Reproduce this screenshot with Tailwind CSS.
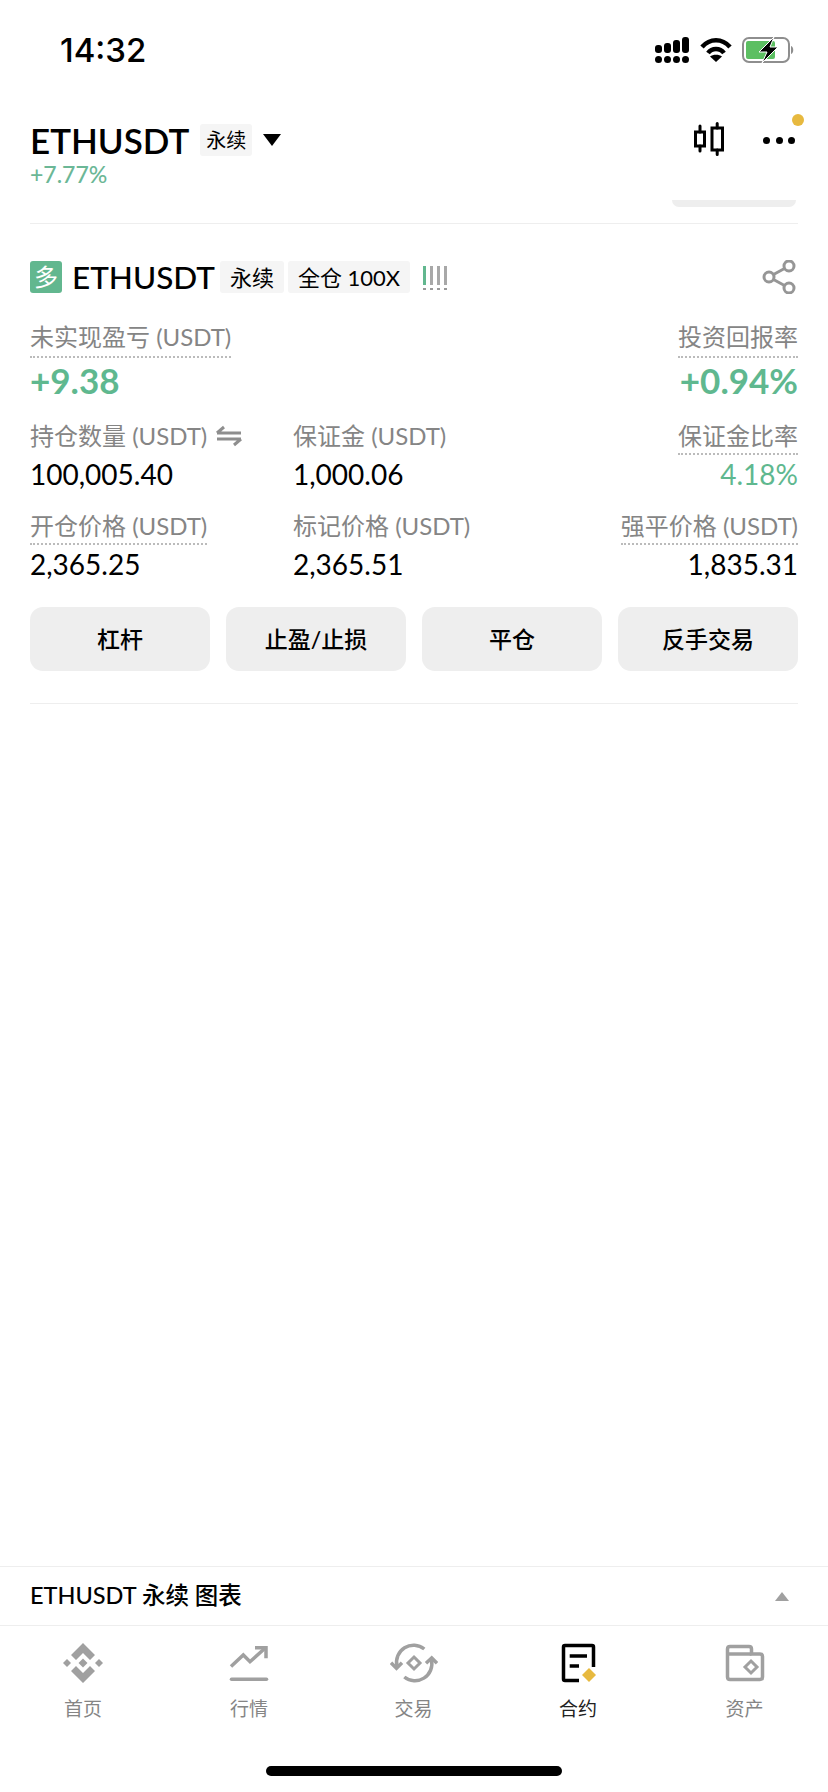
<!DOCTYPE html>
<html lang="zh-CN">
<head>
  <meta charset="UTF-8" />
  <title>ETHUSDT</title>
  <script src="https://cdn.jsdelivr.net/npm/@tailwindcss/browser@4"></script>
</head>
<body class="bg-white text-black font-['Lato','Noto_Sans_CJK_SC',sans-serif]">
  <div class="w-[828px] h-[1792px] flex flex-col overflow-hidden">
    <!-- status bar -->
    <div class="h-[100px] flex justify-between pl-[60px] pr-[33px] pt-[30px] shrink-0">
      <span class="text-[33px] leading-[40px] font-medium font-['Inter',sans-serif]">14:32</span>
      <div class="flex items-start gap-[10px] pt-[7px]">
        <svg class="mr-[1px]" width="34" height="26" viewBox="0 0 34 26" fill="#000">
          <rect x="0" y="8" width="7" height="8" rx="3"/><rect x="9" y="6" width="7" height="10" rx="3"/><rect x="18" y="3" width="7" height="13" rx="3"/><rect x="27" y="0" width="7" height="16" rx="3"/>
          <circle cx="3.500" cy="22.500" r="3.500"/><circle cx="12.500" cy="22.500" r="3.500"/><circle cx="21.500" cy="22.500" r="3.500"/><circle cx="30.500" cy="22.500" r="3.500"/>
        </svg>
        <svg width="32" height="26" viewBox="0 0 32 26" fill="none" stroke="#000" stroke-width="4.500">
          <path d="M2 10 C10 1 22 1 30 10"/><path d="M8 16 C12 10.500 20 10.500 24 16"/><path d="M16 25 L10 19.500 C13 17 19 17 22 19.500 Z" fill="#000" stroke="none"/>
        </svg>
        <svg width="53" height="26" viewBox="0 0 53 26" fill="none">
          <rect x="1" y="1" width="46" height="24" rx="6" stroke="#8e8e8e" stroke-width="2"/>
          <rect x="4" y="4" width="29" height="18" rx="2" fill="#5cbf62"/>
          <path d="M49 9 C52 10 52 16 49 17 Z" fill="#8e8e8e"/>
          <path d="M32 0 L17 15 H25 L20 26 L36 10 H28 Z" fill="#000" stroke="#fff" stroke-width="1"/>
        </svg>
      </div>
    </div>

    <!-- symbol header -->
    <div class="h-[123px] px-[30px] flex justify-between shrink-0">
      <div class="flex flex-col">
        <div class="flex items-center h-[40px] mt-[20px]">
          <span class="text-[35px] leading-[40px] font-semibold">ETHUSDT</span>
          <span class="ml-[11px] bg-[#f5f5f5] rounded-[3px] h-[32px] w-[52px] flex items-center justify-center text-[20px]">永续</span>
          <svg class="ml-[11px]" width="18" height="12" viewBox="0 0 18 12" fill="#000"><path d="M0 0 H18 L9 12 Z"/></svg>
        </div>
        <span class="text-[23px] leading-[28px] font-medium text-[#6bb796]">+7.77%</span>
      </div>
      <div class="relative flex items-start gap-[39px] mt-[22px] mr-[3px]">
        <svg width="30" height="34" viewBox="0 0 30 34" fill="none" stroke="#000" stroke-width="3" stroke-linecap="round">
          <rect x="1.500" y="10" width="9" height="14"/><path d="M6 4 V10 M6 24 V29"/>
          <rect x="18" y="6" width="10.500" height="22"/><path d="M23.200 1.500 V6 M23.200 28 V32.500"/>
        </svg>
        <div class="flex mt-[15px] w-[32px] justify-between">
          <span class="w-[7px] h-[7px] rounded-full bg-black"></span><span class="w-[7px] h-[7px] rounded-full bg-black"></span><span class="w-[7px] h-[7px] rounded-full bg-black"></span>
        </div>
        <span class="absolute right-[-9px] top-[-8px] w-[12px] h-[12px] rounded-full bg-[#e7b93f]"></span>
      </div>
    </div>

    <!-- edge of the card scrolled under the header -->
    <div class="h-[0px] relative shrink-0">
      <div class="absolute left-[672px] top-[-23px] w-[124px] h-[7px] bg-[#eeeeee] rounded-b-[8px]"></div>
    </div>

    <!-- position card -->
    <div class="mx-[30px] border-t border-b border-[#eeeeee] h-[481px] shrink-0">
      <div class="flex items-center justify-between mt-[37px] h-[32px]">
        <div class="flex items-center">
          <span class="w-[32px] h-[32px] rounded-[3px] bg-[#62b78f] text-white text-[24px] flex items-center justify-center">多</span>
          <span class="ml-[10px] text-[31.500px] leading-[32px] font-medium">ETHUSDT</span>
          <span class="ml-[5px] bg-[#f5f5f5] rounded-[3px] h-[32px] w-[64px] flex items-center justify-center text-[22px]">永续</span>
          <span class="ml-[4px] bg-[#f5f5f5] rounded-[3px] h-[32px] w-[122px] flex items-center justify-center text-[22px]">全仓 100X</span>
          <div class="ml-[13px] flex gap-[4px] items-end h-[26px]">
            <span class="flex flex-col items-center gap-[3px]"><span class="w-[3px] h-[19px] bg-[#62b78f]"></span><span class="w-[3px] h-[2px] bg-[#999]"></span></span>
            <span class="flex flex-col items-center gap-[3px]"><span class="w-[3px] h-[19px] bg-[#a8a8a8]"></span><span class="w-[3px] h-[2px] bg-[#999]"></span></span>
            <span class="flex flex-col items-center gap-[3px]"><span class="w-[3px] h-[19px] bg-[#a8a8a8]"></span><span class="w-[3px] h-[2px] bg-[#999]"></span></span>
            <span class="flex flex-col items-center gap-[3px]"><span class="w-[3px] h-[19px] bg-[#a8a8a8]"></span><span class="w-[3px] h-[2px] bg-[#999]"></span></span>
          </div>
        </div>
        <svg class="mr-[2px]" width="34" height="34" viewBox="0 0 34 34" fill="none" stroke="#969696" stroke-width="3">
          <circle cx="7" cy="17" r="5"/><circle cx="27" cy="6" r="5"/><circle cx="27" cy="28" r="5"/><path d="M11.500 14.500 L22.500 8.500 M11.500 19.500 L22.500 25.500"/>
        </svg>
      </div>

      <div class="flex justify-between mt-[28px]">
        <div class="flex flex-col items-start">
          <span class="text-[24px] leading-[31px] text-[#858585] border-b-2 border-dotted border-[#bbbbbb] pb-[4px]">未实现盈亏 (USDT)</span>
          <span class="text-[35px] leading-[40px] font-bold text-[#5fb88f] mt-[2px]">+9.38</span>
        </div>
        <div class="flex flex-col items-end">
          <span class="text-[24px] leading-[31px] text-[#858585] border-b-2 border-dotted border-[#bbbbbb] pb-[4px]">投资回报率</span>
          <span class="text-[35px] leading-[40px] font-bold text-[#5fb88f] mt-[2px]">+0.94%</span>
        </div>
      </div>

      <div class="grid grid-cols-[263px_1fr_auto] mt-[20px]">
        <div class="flex flex-col items-start">
          <span class="text-[24px] leading-[31px] text-[#858585] flex items-center border-b-2 border-transparent pb-[2px]">持仓数量 (USDT)
            <svg class="ml-[9px]" width="26" height="22" viewBox="0 0 26 22" fill="none" stroke="#8e8e8e" stroke-width="3"><path d="M1 8 H25 M1 8 L8 2 M25 14 H1 M25 14 L18 20"/></svg>
          </span>
          <span class="text-[28px] leading-[36px] mt-[1px]">100,005.40</span>
        </div>
        <div class="flex flex-col items-start">
          <span class="text-[24px] leading-[31px] text-[#858585] border-b-2 border-transparent pb-[2px]">保证金 (USDT)</span>
          <span class="text-[28px] leading-[36px] mt-[1px]">1,000.06</span>
        </div>
        <div class="flex flex-col items-end">
          <span class="text-[24px] leading-[31px] text-[#858585] border-b-2 border-dotted border-[#bbbbbb] pb-[2px]">保证金比率</span>
          <span class="text-[28px] leading-[36px] mt-[1px] text-[#5fb88f]">4.18%</span>
        </div>

        <div class="flex flex-col items-start mt-[18px]">
          <span class="text-[24px] leading-[31px] text-[#858585] border-b-2 border-dotted border-[#bbbbbb] pb-[2px]">开仓价格 (USDT)</span>
          <span class="text-[28px] leading-[36px] mt-[1px]">2,365.25</span>
        </div>
        <div class="flex flex-col items-start mt-[18px]">
          <span class="text-[24px] leading-[31px] text-[#858585] border-b-2 border-transparent pb-[2px]">标记价格 (USDT)</span>
          <span class="text-[28px] leading-[36px] mt-[1px]">2,365.51</span>
        </div>
        <div class="flex flex-col items-end mt-[18px]">
          <span class="text-[24px] leading-[31px] text-[#858585] border-b-2 border-dotted border-[#bbbbbb] pb-[2px]">强平价格 (USDT)</span>
          <span class="text-[28px] leading-[36px] mt-[1px]">1,835.31</span>
        </div>
      </div>

      <div class="grid grid-cols-4 gap-[16px] mt-[25px]">
        <button class="h-[64px] rounded-[13px] bg-[#eeeeee] text-[23px] font-medium">杠杆</button>
        <button class="h-[64px] rounded-[13px] bg-[#eeeeee] text-[23px] font-medium">止盈/止损</button>
        <button class="h-[64px] rounded-[13px] bg-[#eeeeee] text-[23px] font-medium">平仓</button>
        <button class="h-[64px] rounded-[13px] bg-[#eeeeee] text-[23px] font-medium">反手交易</button>
      </div>
    </div>

    <div class="flex-1"></div>

    <!-- chart bar -->
    <div class="h-[60px] border-t border-b border-[#eeeeee] px-[30px] flex items-center justify-between shrink-0">
      <span class="text-[23.500px] font-medium">ETHUSDT 永续 图表</span>
      <svg class="mr-[9px]" width="14" height="9" viewBox="0 0 14 9" fill="#a0a0a0"><path d="M7 0 L14 9 H0 Z"/></svg>
    </div>

    <!-- bottom tabs -->
    <div class="h-[135px] grid grid-cols-[166px_166px_163px_166px_167px] shrink-0 pt-[17px]">
      <div class="flex flex-col items-center gap-[13px] text-[#858585]">
        <svg width="40" height="40" viewBox="0 0 40 40" fill="#a0a0a0">
          <path d="M20 0 L32 12 L27 17 L20 10 L13 17 L8 12 Z"/><path d="M20 40 L32 28 L27 23 L20 30 L13 23 L8 28 Z"/>
          <path d="M20 15.500 L24.500 20 L20 24.500 L15.500 20 Z"/><path d="M4 16 L8 20 L4 24 L0 20 Z"/><path d="M36 16 L40 20 L36 24 L32 20 Z"/>
        </svg>
        <span class="text-[19px] leading-[26px]">首页</span>
      </div>
      <div class="flex flex-col items-center gap-[13px] text-[#858585]">
        <svg width="40" height="40" viewBox="0 0 40 40" fill="none" stroke="#a0a0a0" stroke-width="3.500">
          <path d="M2 23.500 L14.300 12 L21 18.700 L36 5.300"/><path d="M26 4.700 H37 V15.300"/><path d="M2.500 36.300 H37.500" stroke-linecap="round"/>
        </svg>
        <span class="text-[19px] leading-[26px]">行情</span>
      </div>
      <div class="flex flex-col items-center gap-[13px] text-[#858585]">
        <svg width="48" height="40" viewBox="0 0 48 40" fill="none" stroke="#a0a0a0" stroke-width="3.500">
          <path d="M34.300 6 A17 17 0 0 0 7 23"/><path d="M14.300 34 A17 17 0 0 0 41.500 17"/>
          <path d="M1 19.700 L6.500 25.300 L12 19.700"/><path d="M36 20.300 L41.700 15 L47 20.300"/>
          <path d="M24 14 L30 20 L24 26 L18 20 Z" stroke-width="3"/>
        </svg>
        <span class="text-[19px] leading-[26px]">交易</span>
      </div>
      <div class="flex flex-col items-center gap-[13px] text-[#222222]">
        <svg width="40" height="40" viewBox="0 0 40 40" fill="none" stroke="#000" stroke-width="3.500">
          <path d="M21 37.500 H7 Q5.500 37.500 5.500 36 V4 Q5.500 2.500 7 2.500 H34 Q35.500 2.500 35.500 4 V24"/>
          <path d="M11.700 13 H29 M11.700 23 H21"/>
          <path d="M31 25 L38 32 L31 39 L24 32 Z" fill="#e7b93f" stroke="none"/>
        </svg>
        <span class="text-[19px] leading-[26px]">合约</span>
      </div>
      <div class="flex flex-col items-center gap-[13px] text-[#858585]">
        <svg width="40" height="40" viewBox="0 0 40 40" fill="none" stroke="#a0a0a0" stroke-width="3.500">
          <path d="M2.500 12 V6 Q2.500 3.500 5 3.500 H24 Q26.500 3.500 26.500 6 V11 H35 Q37.500 11 37.500 13.500 V34 Q37.500 36.500 35 36.500 H5 Q2.500 36.500 2.500 34 Z"/>
          <path d="M2.500 11 H26.500"/>
          <path d="M26 18 L32 24 L26 30 L20 24 Z" stroke-width="3"/>
        </svg>
        <span class="text-[19px] leading-[26px]">资产</span>
      </div>
    </div>

    <!-- home indicator -->
    <div class="h-[31px] flex justify-center shrink-0 pt-[5px]">
      <span class="w-[296px] h-[10px] rounded-full bg-black"></span>
    </div>
  </div>
</body>
</html>
